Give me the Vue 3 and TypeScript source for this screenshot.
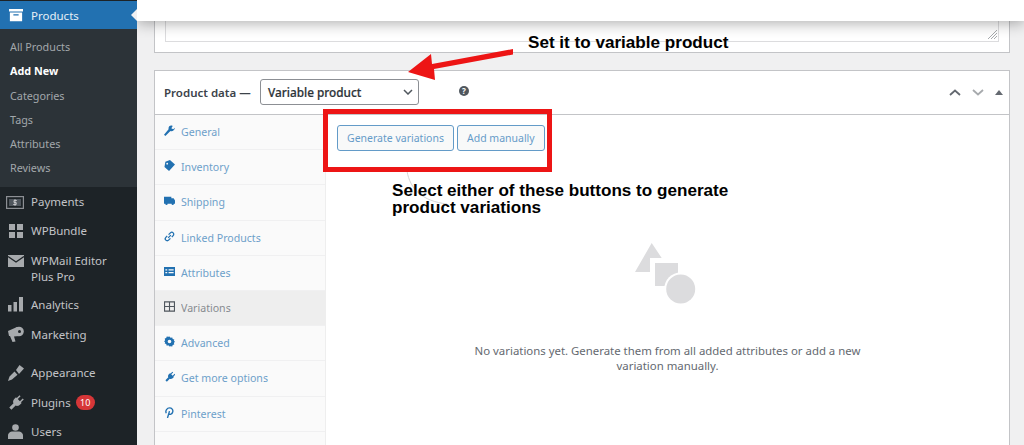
<script setup lang="ts">
const subItems = [
  { label: 'All Products', current: false },
  { label: 'Add New', current: true },
  { label: 'Categories', current: false },
  { label: 'Tags', current: false },
  { label: 'Attributes', current: false },
  { label: 'Reviews', current: false },
]
const tabs = [
  { label: 'General', icon: 'wrench', active: false },
  { label: 'Inventory', icon: 'tag', active: false },
  { label: 'Shipping', icon: 'truck', active: false },
  { label: 'Linked Products', icon: 'link', active: false },
  { label: 'Attributes', icon: 'list', active: false },
  { label: 'Variations', icon: 'grid', active: true },
  { label: 'Advanced', icon: 'gear', active: false },
  { label: 'Get more options', icon: 'plug', active: false },
  { label: 'Pinterest', icon: 'pin', active: false },
]
</script>

<template>
  <div class="page">
    <aside class="sidebar">
      <div class="menu-head">
        <svg class="menu-icon" viewBox="0 0 16 16" width="16" height="14"><path fill="#fff" d="M0 1h16v3H0zM1 5h14v10H1zM5 7v1.500h6V7z" fill-rule="evenodd"/></svg>
        <span>Products</span>
        <i class="notch"></i>
      </div>
      <ul class="submenu">
        <li v-for="s in subItems" :key="s.label" :class="{ current: s.current }">{{ s.label }}</li>
      </ul>
      <nav class="menu">
        <div class="item payments">
          <svg viewBox="0 0 18 13" width="18" height="13">
            <rect x=".6" y=".6" width="16.800" height="11.800" fill="none" stroke="#8c8f94" stroke-width="1.200"/>
            <rect x="3" y="3" width="12" height="7" fill="#50575e"/>
            <path fill="none" stroke="#c3c4c7" d="M10.800 4.500H8v2h2.200v2H7.200M9 3.200v6.600"/>
          </svg>
          <span>Payments</span>
        </div>
        <div class="item bundle">
          <svg viewBox="0 0 14 14" width="14" height="14"><path fill="#a7aaad" d="M0 0h6v6H0zM8 0h6v6H8zM0 8h6v6H0zM8 8h6v6H8z"/></svg>
          <span>WPBundle</span>
        </div>
        <div class="item mail">
          <svg viewBox="0 0 16 12" width="16" height="12"><rect width="16" height="12" fill="#a7aaad"/><path fill="none" stroke="#1d2327" stroke-width="1.400" d="M0 1.500l8 5.500 8-5.500"/></svg>
          <span>WPMail Editor<br />Plus Pro</span>
        </div>
        <div class="item analytics">
          <svg viewBox="0 0 15 15" width="15" height="15"><path fill="#a7aaad" d="M0 8h3.500v6.500H0zM5.500 5H9v9.500H5.500zM11 0h4v14.500h-4z"/></svg>
          <span>Analytics</span>
        </div>
        <div class="item marketing">
          <svg viewBox="0 0 16 16" width="16" height="16">
            <path fill="#a7aaad" d="M0 5 9 1l2 9-5 .500L7.500 15.500 4.500 16 2 10 1 10z"/>
            <circle cx="11" cy="5.500" r="4.800" fill="#a7aaad"/>
            <circle cx="11.500" cy="5.500" r="1.500" fill="#1d2327"/>
          </svg>
          <span>Marketing</span>
        </div>
        <div class="item appearance">
          <svg viewBox="0 0 16 16" width="16" height="16"><path fill="#a7aaad" d="M8 5l3.500-5L16 3.500 11 9zM6.500 6.500 9.500 9.800 4 14.500 0 16l1.500-4.500z"/></svg>
          <span>Appearance</span>
        </div>
        <div class="item plugins">
          <svg viewBox="0 0 16 16" width="16" height="16"><path fill="#a7aaad" transform="rotate(45 8 8)" d="M5 0h1.500v4h3V0H11v4h1v2.500c0 2-1.500 3.500-2.500 3.500v6h-3v-6C5.500 10 4 8.500 4 6.500V4h1z"/></svg>
          <span>Plugins</span>
          <b class="badge">10</b>
        </div>
        <div class="item users">
          <svg viewBox="0 0 15 15" width="15" height="15"><circle cx="7.500" cy="3.500" r="3.300" fill="#a7aaad"/><path fill="#a7aaad" d="M0 15v-3.500C0 9 2.500 7.500 4.500 7.500h6c2 0 4.500 1.500 4.500 4V15z"/></svg>
          <span>Users</span>
        </div>
      </nav>
    </aside>

    <main class="main">
      <section class="box editor-box">
        <div class="editor">
          <svg class="grip" viewBox="0 0 10 10" width="10" height="10"><path fill="none" stroke="#a7aaad" d="M10 1 1 10M10 4 4 10M10 7 7 10"/></svg>
        </div>
      </section>

      <section class="box data-box">
        <header class="data-head">
          <strong>Product data —</strong>
          <div class="select">
            <span>Variable product</span>
            <svg viewBox="0 0 10 6" width="10" height="6"><path fill="none" stroke="#50575e" stroke-width="1.500" d="M1 1l4 4 4-4"/></svg>
          </div>
          <span class="help">?</span>
          <div class="head-actions">
            <svg viewBox="0 0 12 7" width="12" height="7"><path fill="none" stroke="#646970" stroke-width="1.800" d="M1 6l5-4.500L11 6"/></svg>
            <svg viewBox="0 0 12 7" width="12" height="7"><path fill="none" stroke="#a7aaad" stroke-width="1.800" d="M1 1l5 4.500L11 1"/></svg>
            <svg viewBox="0 0 8 5" width="8" height="5"><path fill="#646970" d="M4 0l4 5H0z"/></svg>
          </div>
        </header>
        <div class="data-body">
          <ul class="tabs">
            <li v-for="t in tabs" :key="t.label" :class="{ active: t.active }">
              <svg viewBox="0 0 12 12" width="11" height="11" class="tab-icon">
                <path v-if="t.icon === 'wrench'" d="M0 10.500 1.500 12l5.500-5.500c2 .7 4.500-.5 5-3.500L10 4.500 8 3.500 9.500 1C7-.5 4.500 1.500 5 4.500z" />
                <path v-else-if="t.icon === 'tag'" fill-rule="evenodd" d="M6.500 0 12 5 5.500 12 .5 7.500 1.500 2zM3.500 3a1 1 0 1 0 0 2 1 1 0 0 0 0-2z" />
                <path v-else-if="t.icon === 'truck'" fill-rule="evenodd" d="M0 2h8v1.500h2.500L12 6v3.500h-1.200a1.300 1.300 0 0 1-2.600 0H4a1.300 1.300 0 0 1-2.600 0H0z" />
                <path v-else-if="t.icon === 'link'" fill="none" stroke="currentColor" stroke-width="1.400" d="M5 4 7 2a2 2 0 0 1 3 3L8.500 6.500M7 8l-2 2a2 2 0 0 1-3-3L3.500 5.500M4.500 7.500l3-3" />
                <path v-else-if="t.icon === 'list'" fill-rule="evenodd" d="M0 1h12v10H0zM1.500 3.500v1.500h2V3.500zM5 3.500v1.500h5.500V3.500zM1.500 6.500V8h2V6.500zM5 6.500V8h5.500V6.500z" />
                <path v-else-if="t.icon === 'grid'" fill="none" stroke="currentColor" stroke-width="1.200" d="M.6 1h10.800v10H.6zM.6 6h10.800M6 1v10" />
                <path v-else-if="t.icon === 'gear'" fill-rule="evenodd" d="M6 .5l1.200 1.300 1.800-.3.500 1.700 1.700.6-.4 1.700L12 6l-1.200 1.500.4 1.700-1.700.5-.5 1.800-1.800-.4L6 11.500l-1.300-1.400-1.700.4-.6-1.800-1.600-.5.400-1.700L0 6l1.200-1.500-.4-1.700 1.600-.6.600-1.700 1.700.3zM6 4a2 2 0 1 0 0 4 2 2 0 0 0 0-4z" />
                <path v-else-if="t.icon === 'plug'" transform="rotate(45 6 6) translate(.8 0) scale(.75)" d="M5 0h1.500v4h3V0H11v4h1v2.500c0 2-1.500 3.500-2.500 3.500v6h-3v-6C5.500 10 4 8.500 4 6.500V4h1z" />
                <path v-else fill="none" stroke="currentColor" stroke-width="1.500" d="M3.800 12 6 4.500M2.500 6.800C1 4 3.500 1 6 1s4.200 2 3.500 4.500S6.500 8.700 5.200 7.300" />
              </svg>
              <span>{{ t.label }}</span>
            </li>
          </ul>
          <div class="panel">
            <div class="actions">
              <button type="button">Generate variations</button>
              <button type="button">Add manually</button>
            </div>
            <svg class="shapes" viewBox="0 0 62 62" width="62" height="62">
              <path fill="#dcdcde" d="M16.700 0l10 15H15v14H0z" />
              <path fill="#dcdcde" d="M20 20h23v23H20z" />
              <circle cx="45.700" cy="46" r="16.500" fill="#fff" />
              <circle cx="45.700" cy="46" r="14.500" fill="#dcdcde" />
            </svg>
            <p class="empty">No variations yet. Generate them from all added attributes or add a new variation manually.</p>
          </div>
        </div>
      </section>

      <div class="topbar"></div>
    </main>

    <svg class="stray" viewBox="0 0 50 40" width="50" height="40">
      <path fill="none" stroke="#d5d5d5" stroke-width="1" d="M1 1c3 18 15 30 40 33"/>
    </svg>
    <div class="note note-one">Set it to variable product</div>
    <div class="note note-two">Select either of these buttons to generate<br />product variations</div>
    <div class="redbox"></div>
    <svg class="arrow" viewBox="0 0 110 40" width="110" height="40">
      <path fill="#ed1515" d="M3 27 26 9l1 10L108 4v5.500L29 24l1 11z" />
    </svg>
  </div>
</template>

<style>
html, body { margin: 0; padding: 0; background: #f0f0f1; overflow: hidden; }
</style>

<style scoped>
* { box-sizing: border-box; }
.page {
  position: relative;
  display: flex;
  width: 1024px;
  height: 445px;
  overflow: hidden;
  font-family: "Noto Sans", "Open Sans", sans-serif;
  font-size: 11px;
  background: #f0f0f1;
}
.sidebar {
  position: relative;
  z-index: 2;
  flex: 0 0 137px;
  background: #1d2327;
  color: #c3c4c7;
  padding-top: 1px;
}
.menu-head {
  position: relative;
  display: flex;
  align-items: center;
  gap: 7px;
  height: 28px;
  padding-left: 8px;
  background: #2271b1;
  color: #e6eff6;
  font-size: 11.500px;
}
.notch {
  position: absolute;
  right: 0;
  top: 8px;
  border: 6px solid transparent;
  border-right-color: #f0f0f1;
  border-left-width: 0;
}
.submenu {
  list-style: none;
  margin: 0;
  padding: 6px 0 7px 10px;
  height: 158px;
  background: #2c3338;
  color: #a2a7ab;
}
.submenu li { height: 24.300px; line-height: 24.300px; font-size: 10.800px; }
.submenu li.current { color: #fff; font-weight: 700; }
.item {
  position: relative;
  display: flex;
  align-items: center;
  height: 30px;
  padding-left: 31px;
  font-size: 11.500px;
  line-height: 16px;
}
.item svg { position: absolute; }
.payments { height: 29px; }
.payments svg { left: 6px; top: 9px; }
.bundle svg { left: 9px; top: 8px; }
.mail { height: 44px; align-items: flex-start; padding-top: 7px; }
.mail svg { left: 8px; top: 9px; }
.analytics svg { left: 8px; top: 7px; }
.marketing svg { left: 8px; top: 6px; }
.appearance { margin-top: 8px; }
.appearance svg { left: 8px; top: 7px; }
.plugins { height: 29px; }
.plugins svg { left: 8px; top: 7px; }
.users svg { left: 8px; top: 7px; }
.badge {
  width: 19px;
  height: 15px;
  margin-left: 5px;
  border-radius: 8px;
  background: #d63638;
  color: #fff;
  font-size: 9px;
  font-weight: 400;
  line-height: 15px;
  text-align: center;
}
.main {
  position: relative;
  flex: 1;
  padding: 0 14px 0 17px;
}
.topbar {
  position: absolute;
  left: 0;
  right: 0;
  top: 0;
  height: 21px;
  background: #fff;
  box-shadow: 0 3px 14px rgba(0, 0, 0, .3);
}
.box {
  border: 1px solid #c3c4c7;
  background: #fff;
}
.editor-box {
  height: 53px;
  padding: 0 10px 10px;
  border-top: 0;
}
.editor {
  position: relative;
  height: 42px;
  border: 1px solid #dcdcde;
  border-top: 0;
  background: #fff;
}
.grip { position: absolute; right: 1px; bottom: 2px; }
.data-box {
  height: 380px;
  margin-top: 17px;
  border-bottom: 0;
}
.data-head {
  display: flex;
  align-items: center;
  height: 44px;
  padding: 0 6px 1px 9px;
  border-bottom: 1px solid #c3c4c7;
  color: #1d2327;
}
.data-head strong { width: 96px; font-size: 11.500px; font-weight: 600; color: #3c434a; white-space: nowrap; }
.select {
  display: flex;
  align-items: center;
  justify-content: space-between;
  width: 159px;
  height: 26px;
  padding: 0 5px 0 7px;
  border: 1px solid #8c8f94;
  border-radius: 3px;
  font-size: 11.800px;
  font-weight: 500;
  color: #2c3338;
  -webkit-text-stroke: .2px #2c3338;
}
.help {
  width: 10px;
  height: 10px;
  margin: -2px 0 0 40px;
  border-radius: 50%;
  background: #50575e;
  color: #fff;
  font-size: 8px;
  font-weight: 700;
  line-height: 10px;
  text-align: center;
}
.head-actions {
  display: flex;
  align-items: center;
  gap: 11px;
  margin-left: auto;
}
.data-body { display: flex; height: calc(100% - 44px); }
.tabs {
  flex: 0 0 171px;
  list-style: none;
  margin: 0;
  padding: 0;
  border-right: 1px solid #eee;
  background: #fafafa;
}
.tabs li {
  display: flex;
  align-items: center;
  gap: 6px;
  height: 35.200px;
  padding: 0 0 0 9px;
  border-bottom: 1px solid #f0f0f1;
  font-size: 10.600px;
  color: #2271b1;
}
.tabs li span { opacity: .66; }
.tab-icon { fill: currentColor; flex: none; margin-top: -3px; }
.tabs li.active { background: #eee; color: #50575e; }
.panel {
  position: relative;
  flex: 1;
  background: #fff;
}
.actions { display: flex; gap: 3px; padding: 10px 0 0 11px; }
.actions button {
  height: 26px;
  padding: 0 9px;
  border: 1px solid #2271b1;
  border-radius: 3px;
  background: #f6f7f7;
  color: #2271b1;
  font: inherit;
  font-size: 10.500px;
  opacity: .7;
}
.shapes { display: block; margin: 92px auto 0; transform: translateX(-2px); }
.empty {
  width: 420px;
  margin: 38px auto 0;
  font-size: 11.400px;
  line-height: 15px;
  text-align: center;
  color: #646970;
}
.note {
  position: absolute;
  font-family: "Liberation Sans", Arial, sans-serif;
  font-weight: 700;
  font-size: 17.100px;
  line-height: 17px;
  color: #000;
}
.note-one { left: 528px; top: 34px; }
.note-two { left: 392px; top: 182px; }
.redbox {
  position: absolute;
  left: 323px;
  top: 109px;
  width: 229px;
  height: 63px;
  border: 5px solid #ed1515;
}
.arrow { position: absolute; left: 405px; top: 45px; }
.stray { position: absolute; left: 406px; top: 170px; }
</style>
